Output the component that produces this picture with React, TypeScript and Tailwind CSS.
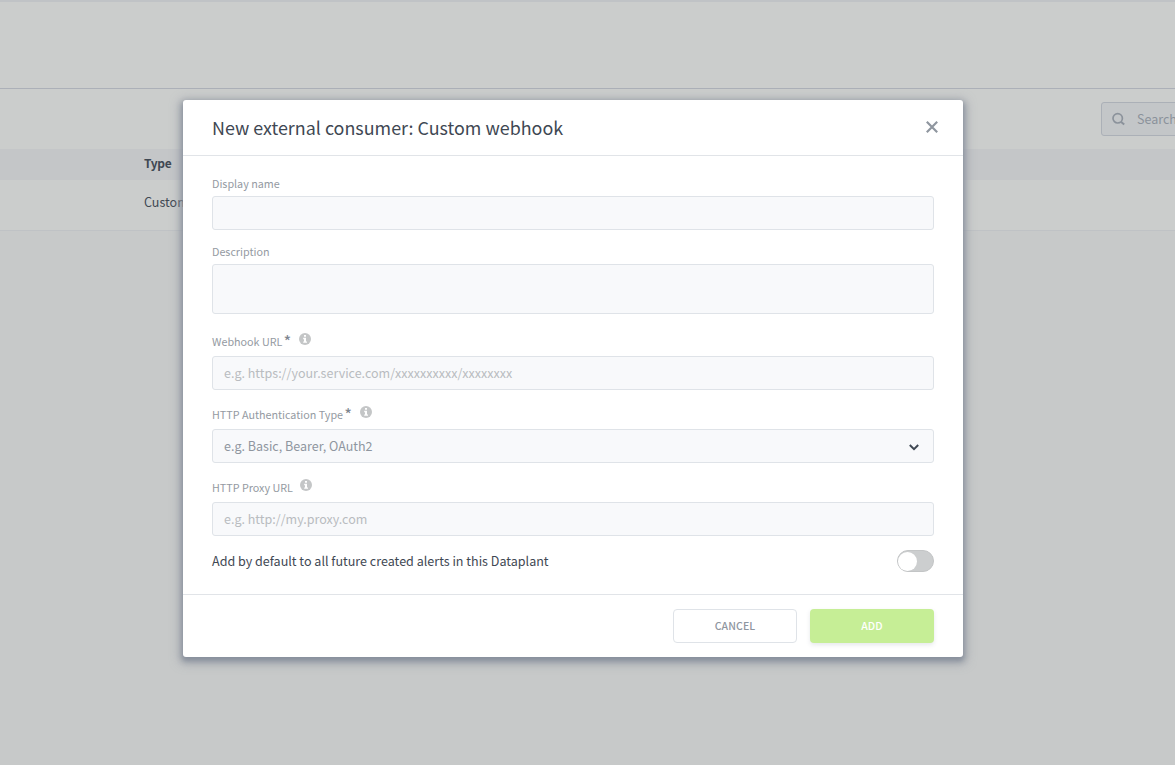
import type { ReactNode } from "react";

function InfoIcon() {
  return (
    <svg width="12" height="12" viewBox="0 0 12 12" className="block">
      <circle cx="6" cy="6" r="6" fill="#c4c6c7" />
      <path d="M5 2h2v1.700H5zM4.200 4.800H7v3.600h1v1.400H4.200V8.400h.8V6.200h-.8z" fill="#fff" />
    </svg>
  );
}

function Label({ children, required }: { children: ReactNode; required?: boolean }) {
  return (
    <span className="flex h-[16px] items-center whitespace-nowrap text-[10.75px] leading-[16px] text-[#949aa2]">
      {children}
      {required && (
        <span className="relative -top-px ml-[1.500px] w-[7.8px] text-[15px] font-medium leading-[16px] text-[#7f868f]">*</span>
      )}
    </span>
  );
}

function InfoLabel({ children, required }: { children: ReactNode; required?: boolean }) {
  return (
    <div className="-mt-px flex h-[17px] items-start pt-px">
      <Label required={required}>{children}</Label>
      <span className="-mt-[1px] ml-[7.500px]">
        <InfoIcon />
      </span>
    </div>
  );
}

const field =
  "w-full rounded-[3px] border border-[#dfe3e8] bg-[#f8f9fb] px-[11px] pb-[2px] text-[12.53px] text-[#3f4853] outline-none placeholder:text-[#b9bcc0] placeholder:opacity-100";

export default function App() {
  return (
    <div className="relative h-[765px] w-[1175px] overflow-hidden bg-[#c7c9c9] font-['Noto_Sans_CJK_SC','Noto_Sans',sans-serif] text-[#3f4853]">
      <div className="flex flex-col">
        <div className="h-[89px] border-t-2 border-b border-t-[#c0c3c6] border-b-[#acb0b8] bg-[#cbcdcc]" />
        <div className="flex h-[60px] justify-end bg-[#cbcdcc] pt-[13px]">
          <div className="-mr-[126px] flex h-[34px] w-[200px] items-center rounded-[3px] border border-[#abb0b7] bg-[#c3c6c8] pl-[10px] text-[12.53px] text-[#8b929b]">
            <svg width="14" height="14" viewBox="0 0 14 14" fill="none" stroke="#8b929b" strokeWidth="1.7">
              <circle cx="5.700" cy="6.300" r="4.700" />
              <path d="M9.200 9.900 12.200 12.500" strokeWidth="2" />
            </svg>
            <span className="ml-[11px]">Search</span>
          </div>
        </div>
        <div className="flex h-[31px] items-center bg-[#c4c6c8] pb-[3px] pl-[144px] text-[12px] font-bold leading-[20px] tracking-[-0.35px]">
          <span>Type</span>
        </div>
        <div className="flex h-[51px] items-center border-b border-[#bfc2c5] bg-[#cbcdcc] pb-[6px] pl-[144px] text-[12.53px] leading-[20px]">
          <span>Custom webhook</span>
        </div>
      </div>

      <div className="absolute inset-0 flex items-start justify-center pr-[29px] pt-[100px]">
        <div
          role="dialog"
          className="flex h-[557px] w-[780px] flex-col rounded-[3px] bg-white shadow-[0_3px_5px_1px_rgba(133,141,154,0.9),0_3px_10px_4px_rgba(140,147,158,0.6)]"
        >
          <header className="flex h-[56px] shrink-0 items-center justify-between border-b border-[#e1e4e8] pb-[2px] pl-[29px] pr-[25px]">
            <h1 className="text-[17.9px] leading-[26px]">New external consumer: Custom webhook</h1>
            <button aria-label="Close">
              <svg width="12" height="12" viewBox="0 0 12 12" className="block" stroke="#8f969f" strokeWidth="2.200">
                <path d="M.8.8 11.200 11.200M11.200.8.8 11.200" />
              </svg>
            </button>
          </header>

          <div className="flex h-[438px] shrink-0 flex-col px-[29px] pt-[20px]">
            <Label>Display name</Label>
            <input aria-label="Display name" className={`${field} mt-[4px] h-[34px] shrink-0`} />
            <div className="mt-[14px] h-[16px]">
              <Label>Description</Label>
            </div>
            <textarea aria-label="Description" className={`${field} mt-[4px] block h-[50px] shrink-0 resize-none`} />
            <div className="mt-[20px]">
              <InfoLabel required>Webhook URL</InfoLabel>
            </div>
            <input
              aria-label="Webhook URL"
              placeholder="e.g. https://your.service.com/xxxxxxxxxx/xxxxxxxx"
              className={`${field} mt-[6px] h-[34px] shrink-0`}
            />
            <div className="mt-[17px]">
              <InfoLabel required>HTTP Authentication Type</InfoLabel>
            </div>
            <button
              className="mt-[6px] flex h-[34px] w-full shrink-0 items-center justify-between rounded-[3px] border border-[#dfe3e8] bg-[#f8f9fb] pl-[11px] pr-[14px] text-[12.53px] text-[#8f969f]"
            >
              <span>e.g. Basic, Bearer, OAuth2</span>
              <svg width="10" height="7" viewBox="0 0 10 7" fill="none" stroke="#3f4853" strokeWidth="2" className="mt-[2px]">
                <path d="M.8 1 5 5.200 9.200 1" />
              </svg>
            </button>
            <div className="mt-[17px]">
              <InfoLabel>HTTP Proxy URL</InfoLabel>
            </div>
            <input
              aria-label="HTTP Proxy URL"
              placeholder="e.g. http://my.proxy.com"
              className={`${field} mt-[6px] h-[34px] shrink-0`}
            />
            <div className="mt-[14px] flex h-[22px] items-center justify-between">
              <span className="text-[12.55px] leading-[20px]">
                Add by default to all future created alerts in this Dataplant
              </span>
              <button
                role="switch"
                aria-checked="false"
                className="flex h-[22px] w-[37px] items-center rounded-full border border-[#c3c5c6] bg-[#cccecf]"
              >
                <span className="size-[19px] rounded-full bg-white" />
              </button>
            </div>
          </div>

          <footer className="flex flex-1 items-start justify-end gap-[13px] border-t border-[#e1e4e8] pr-[29px] pt-[14px] text-[10.5px] font-medium tracking-[0.1px]">
            <button className="h-[34px] w-[124px] rounded-[4px] border border-[#dfe3e8] bg-white pb-px text-[#8f969f]">CANCEL</button>
            <button className="h-[34px] w-[124px] rounded-[4px] bg-[#c6ee96] pb-px text-white shadow-[0_2px_4px_rgba(130,140,155,0.2)]">
              ADD
            </button>
          </footer>
        </div>
      </div>
    </div>
  );
}
